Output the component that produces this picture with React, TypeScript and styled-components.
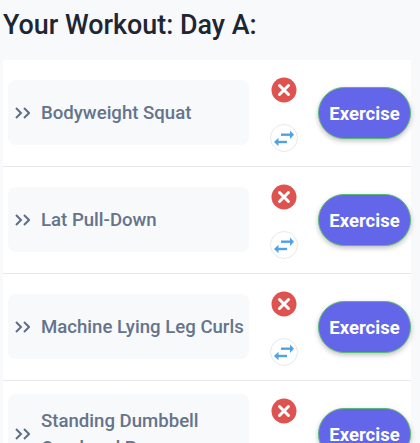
import styled, { createGlobalStyle } from 'styled-components'

const Global = createGlobalStyle`
    html, body {
        margin: 0;
        height: 443px;
        overflow: hidden;
        background: #f8f9fb;
    }
    * {
        box-sizing: border-box;
    }
`

const Page = styled.div`
    width: 420px;
    padding: 10px 9px 0 3px;
    font-family: Roboto, 'Liberation Sans', sans-serif;
`

const Heading = styled.h2`
    margin: 0 0 19px;
    height: 31px;
    color: #1f2633;
    font-size: 26.9px;
    line-height: 31px;
    font-weight: 500;
`

const List = styled.div`
    background: #ffffff;
`

const Row = styled.div`
    display: flex;
    align-items: center;
    height: 107px;
    padding: 0 0 0 5px;
    border-bottom: 1px solid #e6e8ec;
`

const NameBox = styled.div`
    display: flex;
    align-items: center;
    flex: none;
    width: 241px;
    min-height: 65px;
    margin-bottom: 1px;
    padding: 12px 5px 12px 7px;
    background: #f8f9fb;
    border-radius: 8px;
`

const Chevrons = styled.svg`
    flex: none;
    width: 15px;
    height: 12px;
    margin-top: 1px;
    margin-right: 11px;
    color: #5f6d85;
`

const Name = styled.span`
    padding-top: 2px;
    color: #64748b;
    font-size: 18.6px;
    line-height: 27px;
    font-weight: 500;
`

const Actions = styled.div`
    display: flex;
    flex-direction: column;
    align-items: center;
    flex: none;
    width: 69px;
    gap: 20px;
    margin-top: 1px;
`

const IconButton = styled.button`
    display: block;
    width: 28px;
    height: 28px;
    padding: 0;
    border: 0;
    background: none;
`

const Exercise = styled.button`
    flex: none;
    width: 93px;
    height: 52px;
    padding: 1px 0 0;
    color: #ffffff;
    font-family: inherit;
    font-size: 18.5px;
    font-weight: 700;
    background: #6366e9;
    border: 1px solid #5cb874;
    border-radius: 26px;
    box-shadow: 0 2px 5px rgba(0, 0, 0, 0.25);
`

const workouts = ['Bodyweight Squat', 'Lat Pull-Down', 'Machine Lying Leg Curls', 'Standing Dumbbell Overhead Press']

const App = () => (
    <Page>
        <Global />
        <Heading>Your Workout: Day A:</Heading>
        <List>
            {workouts.map((name) => (
                <Row key={name}>
                    <NameBox>
                        <Chevrons viewBox="0 0 15 12" fill="none" stroke="currentColor" strokeWidth="2">
                            <path d="M1 1l5 5-5 5" />
                            <path d="M9 1l5 5-5 5" />
                        </Chevrons>
                        <Name>{name}</Name>
                    </NameBox>
                    <Actions>
                        <IconButton aria-label="remove">
                            <svg width="28" height="28" viewBox="0 0 28 28">
                                <circle cx="14" cy="14" r="12.5" fill="#de5350" />
                                <path d="M9.5 9.5l9 9M18.5 9.5l-9 9" stroke="#fff" strokeWidth="3" strokeLinecap="round" />
                            </svg>
                        </IconButton>
                        <IconButton aria-label="swap">
                            <svg width="28" height="28" viewBox="0 0 28 28">
                                <circle cx="14" cy="14" r="13.5" fill="#fff" stroke="#e6e8ec" />
                                <path d="M11 10.7h10" stroke="#4ea3e8" strokeWidth="2.4" fill="none" />
                                <path d="M20 6.5l4 4.2-4 4.2z" fill="#4ea3e8" />
                                <path d="M17 18H8" stroke="#4ea3e8" strokeWidth="2.4" fill="none" />
                                <path d="M8.5 13.8L4 18l4.5 4.2z" fill="#4ea3e8" />
                            </svg>
                        </IconButton>
                    </Actions>
                    <Exercise>Exercise</Exercise>
                </Row>
            ))}
        </List>
    </Page>
)

export default App
